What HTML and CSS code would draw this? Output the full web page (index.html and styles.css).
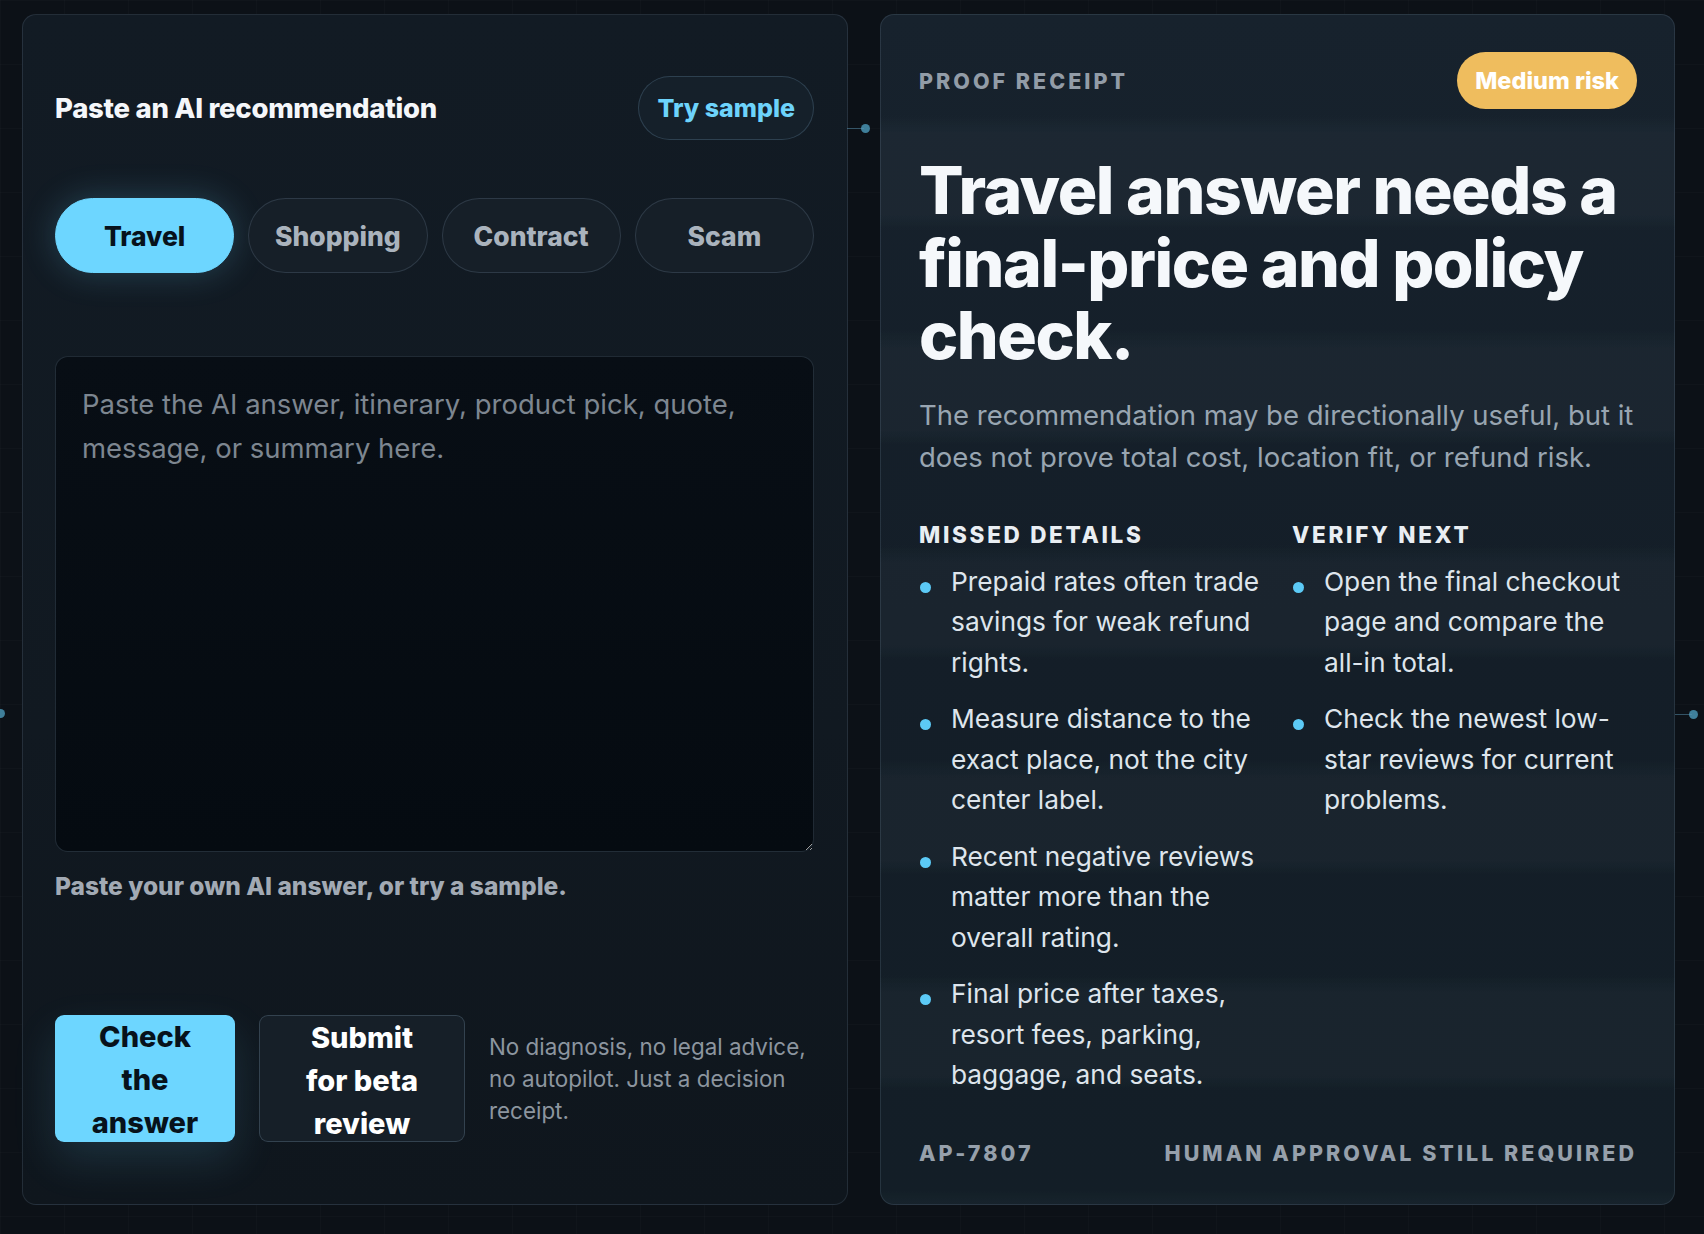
FILE: index.html
```html
<!DOCTYPE html>
<html lang="en">
<head>
  <meta charset="UTF-8">
  <meta name="viewport" content="width=device-width, initial-scale=1.0">
  <title>Proof Receipt</title>
  <link rel="stylesheet" href="styles.css">
</head>
<body>
  <div class="page">
    <span class="node node-mid"></span>
    <span class="node node-left"></span>
    <span class="node node-right"></span>

    <section class="input-panel">
      <div class="input-head">
        <h2>Paste an AI recommendation</h2>
        <button class="sample-btn" type="button">Try sample</button>
      </div>

      <div class="tabs">
        <button class="tab active" type="button">Travel</button>
        <button class="tab" type="button">Shopping</button>
        <button class="tab" type="button">Contract</button>
        <button class="tab" type="button">Scam</button>
      </div>

      <textarea class="answer" placeholder="Paste the AI answer, itinerary, product pick, quote, message, or summary here."></textarea>
      <p class="hint">Paste your own AI answer, or try a sample.</p>

      <div class="actions">
        <button class="btn-check" type="button">Check the answer</button>
        <button class="btn-submit" type="button">Submit for beta review</button>
        <p class="disclaimer">No diagnosis, no legal advice, no autopilot. Just a decision receipt.</p>
      </div>
    </section>

    <section class="receipt">
      <div class="receipt-head">
        <span class="label">Proof receipt</span>
        <span class="risk">Medium risk</span>
      </div>

      <h1>Travel answer needs a final-price and policy check.</h1>
      <p class="summary">The recommendation may be directionally useful, but it does not prove total cost, location fit, or refund risk.</p>

      <div class="columns">
        <div>
          <h3>Missed details</h3>
          <ul>
            <li>Prepaid rates often trade savings for weak refund rights.</li>
            <li>Measure distance to the exact place, not the city center label.</li>
            <li>Recent negative reviews matter more than the overall rating.</li>
            <li>Final price after taxes, resort fees, parking, baggage, and seats.</li>
          </ul>
        </div>
        <div>
          <h3>Verify next</h3>
          <ul>
            <li>Open the final checkout page and compare the all-in total.</li>
            <li>Check the newest low-star reviews for current problems.</li>
          </ul>
        </div>
      </div>

      <div class="receipt-foot">
        <span>AP-7807</span>
        <span>Human approval still required</span>
      </div>
    </section>
  </div>
</body>
</html>
```

FILE: styles.css
```css
* {
  box-sizing: border-box;
}
body {
  margin: 0;
  font-family: Inter, "Noto Sans", sans-serif;
  background-color: #0c1117;
  background-image:
    linear-gradient(rgba(255, 255, 255, 0.016) 1px, transparent 1px),
    linear-gradient(90deg, rgba(255, 255, 255, 0.016) 1px, transparent 1px);
  background-size: 64px 64px;
  color: #f4f7fa;
}
button {
  font-family: inherit;
  cursor: pointer;
}
.page {
  position: relative;
  height: 1234px;
  display: grid;
  grid-template-columns: 826px 795px;
  gap: 32px;
  padding: 14px 29px 29px 22px;
}

/* little connector dots between the panels */
.node {
  position: absolute;
  width: 9px;
  height: 9px;
  border-radius: 50%;
  background: #3f7f9a;
}
.node::before {
  content: "";
  position: absolute;
  top: 4px;
  right: 6px;
  width: 17px;
  height: 1px;
  background: rgba(90, 150, 180, 0.5);
}
.node-mid {
  left: 861px;
  top: 124px;
}
.node-right {
  left: 1689px;
  top: 710px;
}
.node-left {
  left: -4px;
  top: 709px;
}
.node-left::before {
  display: none;
}

/* left panel */
.input-panel {
  display: flex;
  flex-direction: column;
  padding: 61px 33px 62px 32px;
  border: 1px solid rgba(140, 170, 195, 0.16);
  border-radius: 14px;
  background: linear-gradient(180deg, #121b24 0%, #111921 60%, #0f161d 100%);
}
.input-head {
  display: flex;
  align-items: center;
  justify-content: space-between;
  height: 64px;
}
.input-head h2 {
  margin: 0;
  font-size: 27.5px;
  font-weight: 800;
  letter-spacing: -0.01em;
  color: #f5f7fa;
}
.sample-btn {
  height: 64px;
  padding: 0 18px;
  border: 1px solid rgba(120, 160, 190, 0.25);
  border-radius: 999px;
  background: #15202a;
  color: #6dd3fb;
  font-size: 25px;
  font-weight: 800;
}
.tabs {
  display: grid;
  grid-template-columns: repeat(4, 1fr);
  gap: 14px;
  margin-top: 58px;
}
.tab {
  height: 75px;
  border: 1px solid rgba(140, 165, 190, 0.2);
  border-radius: 999px;
  background: #161f28;
  color: #aab3bd;
  font-size: 26.5px;
  font-weight: 800;
}
.tab.active {
  border-color: #6dd6ff;
  background: #6dd6ff;
  color: #07121b;
  box-shadow: 0 0 34px rgba(109, 214, 255, 0.22);
}
.answer {
  display: block;
  width: 100%;
  height: 496px;
  margin-top: 83px;
  padding: 26px 26px;
  border: 1px solid rgba(140, 170, 195, 0.2);
  border-radius: 13px;
  background: linear-gradient(180deg, #080e15 0%, #050b11 100%);
  color: #e6ebf0;
  font-family: inherit;
  font-size: 27.5px;
  line-height: 43.5px;
  resize: vertical;
  outline: none;
}
.answer::placeholder {
  color: #7d8690;
}
.hint {
  margin: 19px 0 0;
  font-size: 24.5px;
  line-height: 1.3;
  font-weight: 800;
  color: #a2aab4;
}
.actions {
  display: flex;
  align-items: center;
  gap: 24px;
  margin-top: auto;
}
.btn-check,
.btn-submit {
  flex: none;
  height: 127px;
  border-radius: 9px;
  font-size: 29px;
  line-height: 43px;
  font-weight: 800;
}
.btn-check {
  width: 180px;
  padding: 0 26px;
  border: none;
  background: #6dd6ff;
  color: #07121b;
  box-shadow: 0 18px 44px rgba(109, 214, 255, 0.14);
}
.btn-submit {
  width: 206px;
  padding: 0 31px;
  border: 1px solid rgba(140, 170, 195, 0.25);
  background: #161f28;
  color: #ffffff;
}
.disclaimer {
  margin: 0;
  font-size: 22.4px;
  line-height: 32px;
  color: #8c959f;
}

/* right panel */
.receipt {
  display: flex;
  flex-direction: column;
  padding: 37px 37px 38px 38px;
  border: 1px solid rgba(140, 170, 195, 0.16);
  border-radius: 14px;
  background-color: #16212b;
  background-image:
    repeating-linear-gradient(180deg, rgba(0, 0, 0, 0.05) 0, rgba(0, 0, 0, 0.05) 100px, rgba(255, 255, 255, 0.02) 118px, rgba(255, 255, 255, 0.02) 200px, rgba(0, 0, 0, 0.05) 215px),
    linear-gradient(180deg, #18242f 0%, #15202a 50%, #142029 100%);
}
.receipt-head {
  display: flex;
  align-items: center;
  justify-content: space-between;
}
.label {
  font-size: 21.5px;
  font-weight: 800;
  letter-spacing: 0.14em;
  text-transform: uppercase;
  color: #929ca7;
}
.risk {
  height: 57px;
  padding: 0 18px;
  display: flex;
  align-items: center;
  border-radius: 999px;
  background: #efbd5e;
  color: #ffffff;
  font-size: 23.5px;
  font-weight: 800;
}
.receipt h1 {
  margin: 45px 0 0;
  font-size: 66px;
  line-height: 1.1;
  font-weight: 800;
  letter-spacing: -0.022em;
  color: #f5f8fb;
}
.summary {
  margin: 22px 0 0;
  font-size: 27.5px;
  line-height: 42.5px;
  color: #98a5b1;
}
.columns {
  display: grid;
  grid-template-columns: 1fr 1fr;
  gap: 28px;
  margin-top: 42px;
}
.columns h3 {
  margin: 0;
  font-size: 22.5px;
  line-height: 27px;
  font-weight: 800;
  letter-spacing: 0.12em;
  text-transform: uppercase;
  color: #e9eef3;
}
.columns ul {
  list-style: none;
  margin: 14px 0 0;
  padding: 0;
}
.columns li {
  position: relative;
  padding-left: 32px;
  margin-bottom: 16px;
  font-size: 26.3px;
  line-height: 40.5px;
  color: #dee5ec;
}
.columns li::before {
  content: "";
  position: absolute;
  left: 1px;
  top: 20px;
  width: 11px;
  height: 11px;
  border-radius: 50%;
  background: #5ccaf6;
}
.receipt-foot {
  display: flex;
  justify-content: space-between;
  margin-top: auto;
  font-size: 21.5px;
  line-height: 26px;
  font-weight: 800;
  letter-spacing: 0.14em;
  text-transform: uppercase;
  color: #96a0ab;
}
```
